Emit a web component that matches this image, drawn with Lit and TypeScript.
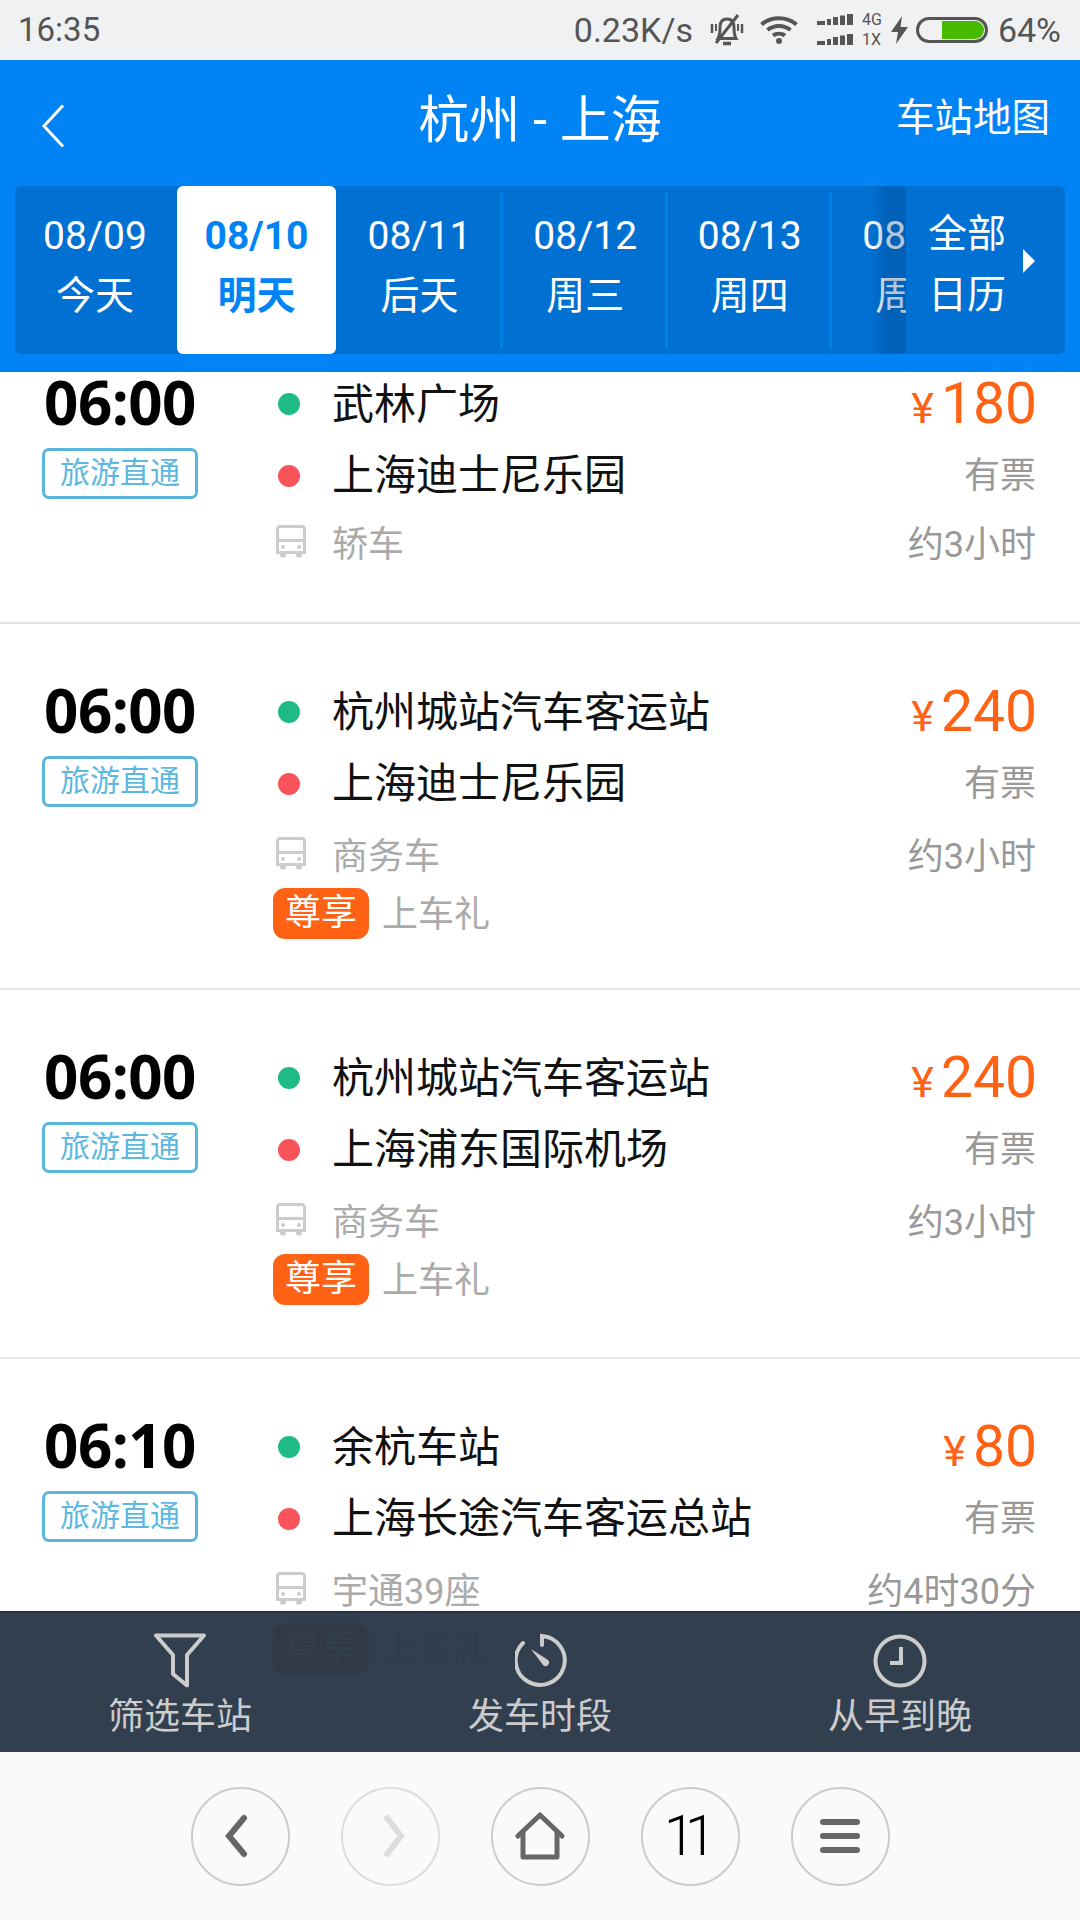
import { LitElement, html, css } from "lit";
import { customElement } from "lit/decorators.js";

const busIcon = html`<svg class="bus" width="30" height="33" viewBox="0 0 30 33">
  <path d="M4 1.5H26A2.5 2.5 0 0 1 28.500 4V27.500H1.500V4A2.500 2.500 0 0 1 4 1.500Z" fill="none" stroke="#ccc" stroke-width="3"/>
  <path d="M2 15.500H28" stroke="#ccc" stroke-width="3"/>
  <circle cx="7" cy="22" r="2" fill="#ccc"/><circle cx="23" cy="22" r="2" fill="#ccc"/>
  <path d="M4 28H10V30.500A2 2 0 0 1 8 32.500H6A2 2 0 0 1 4 30.500ZM20 28H26V30.500A2 2 0 0 1 24 32.500H22A2 2 0 0 1 20 30.500Z" fill="#ccc"/>
</svg>`;

interface Trip { time: string; from: string; to: string; price: string; car: string; dur: string; gift: boolean; }
const trips: Trip[] = [
  { time: "06:00", from: "武林广场", to: "上海迪士尼乐园", price: "180", car: "轿车", dur: "约3小时", gift: false },
  { time: "06:00", from: "杭州城站汽车客运站", to: "上海迪士尼乐园", price: "240", car: "商务车", dur: "约3小时", gift: true },
  { time: "06:00", from: "杭州城站汽车客运站", to: "上海浦东国际机场", price: "240", car: "商务车", dur: "约3小时", gift: true },
  { time: "06:10", from: "余杭车站", to: "上海长途汽车客运总站", price: "80", car: "宇通39座", dur: "约4时30分", gift: true },
];
const days = [
  ["08/09", "今天"], ["08/10", "明天"], ["08/11", "后天"], ["08/12", "周三"], ["08/13", "周四"], ["08/14", "周五"],
];

@customElement("app-root")
export class AppRoot extends LitElement {
  static styles = css`
    :host { display: block; width: 1080px; height: 1920px; font-family: Roboto, "Noto Sans CJK SC", sans-serif; }
    .page { width: 1080px; height: 1920px; display: flex; flex-direction: column; background: #fff; overflow: hidden; }

    .status { height: 60px; flex: none; background: #f0f1f3; color: #555; display: flex; align-items: center; justify-content: space-between; padding: 0 19px 0 18px; box-sizing: border-box; font-size: 33px; line-height: 60px; }
    .status-right { display: flex; align-items: center; font-size: 34px; }
    .speed { margin-right: 17px; }
    .bell { margin-right: 16px; }
    .wifi { margin-right: 19px; }
    .signal { display: grid; grid-template-columns: 37px auto; column-gap: 8px; row-gap: 8px; align-items: center; margin-right: 9px; font-size: 16px; line-height: 12px; }
    .bolt { margin-right: 8px; }
    .batt { width: 72px; height: 26px; box-sizing: border-box; border: 3px solid #555; border-radius: 13px; margin-right: 10px; display: flex; justify-content: flex-end; padding: 1px; }
    .batt i { display: block; width: 42px; height: 18px; background: #46bb00; border-radius: 0 9px 9px 0; }

    .head { height: 312px; flex: none; background: #0084f5; color: #fff; display: flex; flex-direction: column; box-sizing: border-box; padding: 0 15px; }
    .nav { height: 126px; display: flex; align-items: center; justify-content: space-between; position: relative; }
    .back { margin-left: 26px; margin-top: 6px; }
    .title { position: absolute; left: 0; right: 0; text-align: center; font-size: 51px; line-height: 60px; margin-top: -5px; }
    .map { font-size: 38.500px; line-height: 50px; margin-right: 15px; margin-top: -10px; }
    .strip { height: 168px; background: #0070d2; border-radius: 6px; position: relative; overflow: hidden; display: flex; }
    .cell { flex: none; width: 164.500px; padding: 6px 0; box-sizing: border-box; display: flex; }
    .cell:first-child { width: 160px; margin-right: 2px; }
    .cell.sel { width: 159px; padding: 0; }
    .cell.sel + .cell { width: 167px; }
    .cell-in { flex: 1; display: flex; flex-direction: column; align-items: center; padding: 14px 0 0 3px; font-size: 39px; line-height: 60px; border-right: 3px solid #0082e6; box-sizing: border-box; }
    .cell:first-child .cell-in { border-right: none; padding-left: 0; }
    .cell.sel .cell-in { background: #fff; color: #0084f5; font-weight: 700; border: none; border-radius: 6px; padding: 20px 0 0 0; }
    .all { position: absolute; right: 0; top: 0; bottom: 0; width: 159px; background: #0070d2; display: flex; align-items: center; padding-left: 22px; box-sizing: border-box; font-size: 39px; line-height: 61px; border-radius: 6px; }
    .all::before { content: ""; position: absolute; right: 100%; top: 0; bottom: 0; width: 34px; background: linear-gradient(to right, rgba(0,60,120,0), rgba(0,60,120,.28) 40%, rgba(0,60,120,.3)); border-radius: 0 6px 6px 0; }
    .all-t { width: 95px; padding-bottom: 10px; }
    .tri { width: 0; height: 0; border-left: 12px solid #fff; border-top: 12px solid transparent; border-bottom: 12px solid transparent; margin-top: -18px; }

    .list { flex: 1; min-height: 0; position: relative; overflow: hidden; }
    .rows { margin-top: -58px; }
    .row { display: flex; padding: 54px 0 41px; border-bottom: 2px solid #e4e4e4; margin-bottom: -2px; }
    .row:nth-child(3) { padding-bottom: 44px; }
    .left { width: 240px; flex: none; display: flex; flex-direction: column; align-items: center; }
    .time { font-family: "Open Sans", sans-serif; font-weight: 700; font-size: 60px; letter-spacing: -0.500px; line-height: 71px; color: #000; margin-top: -1px; }
    .tag { width: 156px; height: 51px; margin-top: 10px; box-sizing: border-box; border: 3px solid #5ab5dd; border-radius: 7px; color: #5cb8e0; font-size: 30px; line-height: 43px; text-align: center; }
    .mid { flex: 1; margin-left: 33px; padding-right: 43px; }
    .line { height: 71px; display: flex; align-items: center; }
    .dot { width: 22px; height: 22px; border-radius: 50%; margin: 0 32px 0 5px; flex: none; }
    .green { background: #1fbb85; }
    .red { background: #f9535b; margin-top: 2px; }
    .st { font-size: 42px; color: #111; flex: 1; padding-bottom: 6px; }
    .bus { margin: 0 26px 0 3px; flex: none; }
    .car { font-size: 36px; color: #aaa; flex: 1; padding-bottom: 2px; }
    .price { color: #ff6214; font-size: 57px; display: flex; align-items: baseline; }
    .yen { font-size: 43px; margin-right: 7px; }
    .r { font-size: 36px; color: #999; padding-bottom: 6px; margin-right: 1px; }
    .dur { padding-bottom: 2px; }
    .nog { transform: translateY(-4px); }
    .gift { display: flex; align-items: center; height: 51px; margin-top: -1px; margin-bottom: 8px; }
    .badge { width: 96px; height: 51px; background: #ff6214; border-radius: 12px; color: #fff; font-size: 36px; line-height: 50px; text-align: center; margin-right: 13px; }
    .giftt { font-size: 36px; color: #aaa; padding-bottom: 6px; }

    .tools { position: absolute; left: 0; right: 0; bottom: 0; height: 141px; box-sizing: border-box; background: rgba(42,56,73,.965); border-top: 2px solid #232f3c; display: grid; grid-template-columns: repeat(3, 1fr); }
    .tool { display: flex; flex-direction: column; align-items: center; padding-top: 20px; color: #ccc; font-size: 36px; line-height: 52px; }
    .tool svg { display: block; height: 55px; margin-bottom: 3px; }
    .tool:nth-child(2) svg { margin-left: 3px; }

    .browser { height: 168px; flex: none; background: #fafafa; display: flex; align-items: center; justify-content: center; gap: 51px; }
    .circle { width: 99px; height: 99px; box-sizing: border-box; border: 2px solid #ccc; border-radius: 50%; display: flex; align-items: center; justify-content: center; }
    .circle.off { border-color: #ddd; }
    .prev { margin-right: 8px; }
    .next { margin-left: 7px; }
    .tabs { font-size: 56px; font-weight: 300; color: #000; letter-spacing: -10px; padding-right: 10px; line-height: 60px; }
    .menu { width: 40px; display: flex; flex-direction: column; gap: 8px; }
    .menu i { display: block; height: 6px; background: #666; border-radius: 3px; }
  `;

  private trip(t: Trip) {
    return html`<div class="row">
      <div class="left"><div class="time">${t.time}</div><div class="tag">旅游直通</div></div>
      <div class="mid">
        <div class="line"><span class="dot green"></span><span class="st">${t.from}</span><span class="price"><span class="yen">¥</span>${t.price}</span></div>
        <div class="line"><span class="dot red"></span><span class="st">${t.to}</span><span class="r">有票</span></div>
        <div class="line ${t.gift ? "" : "nog"}">${busIcon}<span class="car">${t.car}</span><span class="r dur">${t.dur}</span></div>
        ${t.gift ? html`<div class="gift"><span class="badge">尊享</span><span class="giftt">上车礼</span></div>` : ""}
      </div>
    </div>`;
  }

  private bars() {
    return html`<svg width="37" height="12" viewBox="0 0 37 12" fill="#555">
      <rect x="0" y="7" width="8" height="4"/><rect x="10" y="5" width="4" height="6"/><rect x="16" y="3" width="5" height="8"/><rect x="23" y="1.500" width="5" height="9.500"/><rect x="30" y="0" width="6" height="11"/>
    </svg>`;
  }

  render() {
    return html`<div class="page">
      <div class="status">
        <span>16:35</span>
        <div class="status-right">
          <span class="speed">0.23K/s</span>
          <svg class="bell" width="34" height="32" viewBox="0 0 34 32" fill="none" stroke="#555" stroke-width="3">
            <path d="M8 24.500C10 21 10 18 10 13C10 7.500 13 5 17 5C21 5 24 7.500 24 13C24 18 24 21 26 24.500Z"/><path d="M13 29.500H21" stroke-width="3.500"/><path d="M2 10V19M32 10V19" stroke-width="2.500"/><path d="M6 10V17M28 10V17" stroke-width="2"/><path d="M28 1L6 29"/>
          </svg>
          <svg class="wifi" width="38" height="28" viewBox="0 0 38 28" fill="none" stroke="#555" stroke-width="4">
            <path d="M1.500 8.500C11 0 27 0 36.500 8.500"/><path d="M7.500 14C14 8.500 24 8.500 30.500 14"/><path d="M13 19.500C16.500 17 21.500 17 25 19.500"/><circle cx="19" cy="25" r="3" fill="#555" stroke="none"/>
          </svg>
          <div class="signal">${this.bars()}<span>4G</span>${this.bars()}<span>1X</span></div>
          <svg class="bolt" width="17" height="28" viewBox="0 0 17 28" fill="#555"><path d="M11 0L0 16H7L5 28L17 11H9.500Z"/></svg>
          <div class="batt"><i></i></div>
          <span>64%</span>
        </div>
      </div>

      <div class="head">
        <div class="nav">
          <svg class="back" width="24" height="44" viewBox="0 0 24 44" fill="none" stroke="#fff" stroke-width="3"><path d="M22 1.500L3 22L22 42.500"/></svg>
          <div class="title">杭州 - 上海</div>
          <div class="map">车站地图</div>
        </div>
        <div class="strip">
          ${days.map((d, i) => html`<div class="cell ${i === 1 ? "sel" : ""}"><div class="cell-in"><span>${d[0]}</span><span>${d[1]}</span></div></div>`)}
          <div class="all"><div class="all-t">全部<br />日历</div><span class="tri"></span></div>
        </div>
      </div>

      <div class="list">
        <div class="rows">${trips.map((t) => this.trip(t))}</div>
        <div class="tools">
          <div class="tool">
            <svg width="52" height="55" viewBox="0 0 52 55" fill="none" stroke="#ccc" stroke-width="4" stroke-linejoin="round"><path d="M2 2.500H50L33 22V52.500L19 41V22Z"/></svg>
            <span>筛选车站</span>
          </div>
          <div class="tool">
            <svg width="54" height="55" viewBox="0 0 54 55" fill="none" stroke="#ccc" stroke-width="4" stroke-linecap="round"><path d="M8 10A24.500 24.500 0 1 0 27 3V12"/><path d="M16 16L33 27A3.500 3.500 0 0 1 28 32Z" fill="#ccc" stroke="none"/></svg>
            <span>发车时段</span>
          </div>
          <div class="tool">
            <svg width="54" height="55" viewBox="0 0 54 55" fill="none" stroke="#ccc" stroke-width="4"><circle cx="27" cy="28" r="24.500"/><path d="M28 14V30H17"/></svg>
            <span>从早到晚</span>
          </div>
        </div>
      </div>

      <div class="browser">
        <div class="circle"><svg class="prev" width="24" height="44" viewBox="0 0 24 44" fill="none" stroke="#666" stroke-width="6" stroke-linecap="round"><path d="M20 4L5 22L20 40"/></svg></div>
        <div class="circle off"><svg class="next" width="24" height="44" viewBox="0 0 24 44" fill="none" stroke="#ddd" stroke-width="6" stroke-linecap="round"><path d="M5 4L19 22L5 40"/></svg></div>
        <div class="circle"><svg width="50" height="48" viewBox="0 0 50 48" fill="none" stroke="#666" stroke-width="5" stroke-linejoin="round" stroke-linecap="round"><path d="M3 24L25 3L47 24"/><path d="M8 20V45H42V20"/></svg></div>
        <div class="circle"><span class="tabs">11</span></div>
        <div class="circle"><div class="menu"><i></i><i></i><i></i></div></div>
      </div>
    </div>`;
  }
}
